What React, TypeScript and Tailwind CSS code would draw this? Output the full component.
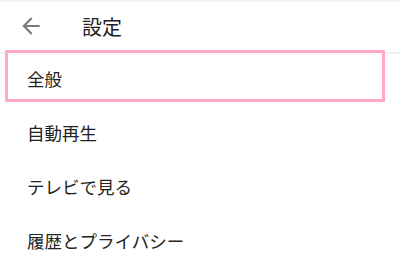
import React from "react";

const items = ["全般", "自動再生", "テレビで見る", "履歴とプライバシー"];

const BackArrow = () => (
  <svg width="26" height="26" viewBox="0 0 24 24" className="-mt-[3px]">
    <path
      d="M20 11H7.83l5.59-5.59L12 4l-8 8 8 8 1.41-1.41L7.83 13H20v-2z"
      fill="#7a7a7a"
    />
  </svg>
);

export default function App() {
  return (
    <div
      className="relative w-[400px] h-[271px] overflow-hidden bg-white border-t-2 border-[#f2f2f2]"
      style={{ fontFamily: '"Noto Sans CJK JP", "Noto Sans", sans-serif' }}
    >
      <header className="flex items-center h-[50px] shadow-[0_1px_2px_rgba(0,0,0,0.12)] relative z-10 bg-white">
        <div className="pl-[18px] w-[82px] flex items-center">
          <BackArrow />
        </div>
        <h1 className="text-[20px] text-[#212121] leading-none">設定</h1>
      </header>
      <ul>
        {items.map((label) => (
          <li
            key={label}
            className="h-[54px] flex items-center pl-[27px] text-[17.5px] text-[#222]"
          >
            {label}
          </li>
        ))}
      </ul>
      <div className="absolute left-[5px] top-[48px] w-[380px] h-[52px] border-[3px] border-[#ffa8c8] z-20 pointer-events-none" />
    </div>
  );
}
